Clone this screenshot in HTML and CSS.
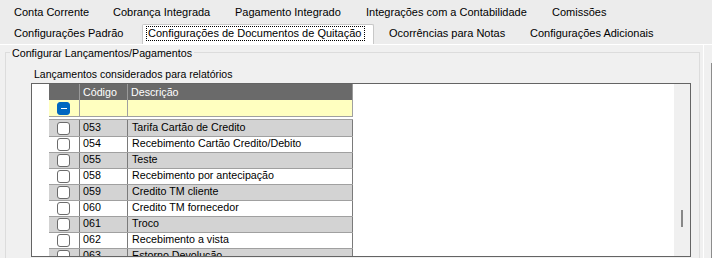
FILE: index.html
```html
<!DOCTYPE html>
<html lang="pt-BR">
<head>
<meta charset="utf-8">
<title>Configurações de Documentos de Quitação</title>
<link rel="stylesheet" href="styles.css">
</head>
<body>
<div class="tabs">
  <div class="tabrow r1">
    <div class="tab c1">Conta Corrente</div>
    <div class="tab c2">Cobrança Integrada</div>
    <div class="tab c3">Pagamento Integrado</div>
    <div class="tab c4">Integrações com a Contabilidade</div>
    <div class="tab">Comissões</div>
  </div>
  <div class="tabrow r2">
    <div class="tab d1">Configurações Padrão</div>
    <div class="tab sel"><span class="focus">Configurações de Documentos de Quitação</span></div>
    <div class="tab d3">Ocorrências para Notas</div>
    <div class="tab">Configurações Adicionais</div>
  </div>
</div>
<div class="body">
  <div class="page">
    <fieldset class="group">
      <legend>Configurar Lançamentos/Pagamentos</legend>
      <div class="lbl">Lançamentos considerados para relatórios</div>
      <div class="grid">
        <div class="rh"></div>
        <div class="tbl">
          <div class="row hdr"><div class="c ck"></div><div class="c cod">Código</div><div class="c desc">Descrição</div></div>
          <div class="row flt"><div class="c ck"><span class="box on"></span></div><div class="c cod"></div><div class="c desc"></div></div>
          <div class="gap"></div>
          <div class="rows">
            <div class="row d alt"><div class="c ck"><span class="box"></span></div><div class="c cod">053</div><div class="c desc">Tarifa Cartão de Credito</div></div>
            <div class="row d"><div class="c ck"><span class="box"></span></div><div class="c cod">054</div><div class="c desc">Recebimento Cartão Credito/Debito</div></div>
            <div class="row d alt"><div class="c ck"><span class="box"></span></div><div class="c cod">055</div><div class="c desc">Teste</div></div>
            <div class="row d"><div class="c ck"><span class="box"></span></div><div class="c cod">058</div><div class="c desc">Recebimento por antecipação</div></div>
            <div class="row d alt"><div class="c ck"><span class="box"></span></div><div class="c cod">059</div><div class="c desc">Credito TM cliente</div></div>
            <div class="row d"><div class="c ck"><span class="box"></span></div><div class="c cod">060</div><div class="c desc">Credito TM fornecedor</div></div>
            <div class="row d alt"><div class="c ck"><span class="box"></span></div><div class="c cod">061</div><div class="c desc">Troco</div></div>
            <div class="row d"><div class="c ck"><span class="box"></span></div><div class="c cod">062</div><div class="c desc">Recebimento a vista</div></div>
            <div class="row d alt"><div class="c ck"><span class="box"></span></div><div class="c cod">063</div><div class="c desc">Estorno Devolução</div></div>
          </div>
        </div>
        <div class="vs"><div class="thumb"></div></div>
      </div>
    </fieldset>
  </div>
  <div class="edge"><div class="eline"></div></div>
</div>
</body>
</html>
```
FILE: styles.css
```css
* { box-sizing: border-box; }
body {
  margin: 0;
  width: 712px;
  height: 258px;
  overflow: hidden;
  background: #f0f0f0;
  font-family: "Liberation Sans", Arial, sans-serif;
  color: #000;
}
.tabs { height: 44px; background: #ececec; }
.tabrow { display: flex; height: 22px; padding-left: 14px; font-size: 11px; white-space: nowrap; }
.r1 .tab { padding-top: 3px; line-height: 19px; }
.r2 .tab { line-height: 22px; }
.c1 { width: 99px; }
.c2 { width: 122px; }
.c3 { width: 131px; }
.c4 { width: 186px; }
.d1 { width: 128px; }
.r2 .sel {
  width: 232px;
  margin-top: 2px;
  height: 20px;
  background: #fff;
  border: 1px solid #c8c8c8;
  border-bottom: none;
  border-radius: 2px 2px 0 0;
  padding: 1px 0 0 3px;
  line-height: 13px;
}
.focus { display: inline-block; border: 1px dotted #000; padding: 0 3px 0 1px; line-height: 13px; }
.d3 { width: 141px; margin-left: 15px; }

.body { display: flex; height: 214px; border-top: 1px solid #fff; overflow: hidden; }
.page { width: 704px; flex: none; border-right: 1px solid #fff; padding-left: 5px; }
.edge { flex: 1; padding-top: 18px; }
.eline { margin-left: 7px; width: 1px; height: 100%; background: #8c8c8c; }

.group {
  margin: 0;
  padding: 0;
  min-width: 0;
  width: 695px;
  height: 230px;
  border: 1px solid #dcdcdc;
}
.group legend { margin-left: 4px; padding: 2px 2px 0; font-size: 10.7px; line-height: 13px; }
.lbl { padding: 8px 0 0 28px; font-size: 10.5px; line-height: 13px; }

.grid {
  margin: 2px 0 0 25px;
  width: 660px;
  height: 174px;
  border: 1px solid #646464;
  background: #fff;
  display: flex;
  overflow: hidden;
}
.rh { width: 17px; flex: none; }
.tbl { width: 625px; flex: none; }
.vs { width: 16px; flex: none; background: #f0f0f0; padding: 126px 0 0 7px; }
.thumb { width: 2px; height: 17px; background: #888; }

.row { display: flex; width: 304px; }
.c { flex: none; border-right: 1px solid #7a7a7a; white-space: nowrap; overflow: hidden; }
.ck { width: 31px; }
.cod { width: 48px; padding-left: 3px; }
.desc { width: 225px; padding-left: 4px; }

.hdr { height: 16px; background: #6a6a6a; color: #fff; font-size: 10.7px; line-height: 16px; }
.hdr .c { border-right-color: #9a9a9a; }
.hdr .desc { padding-left: 3px; }
.flt { height: 17px; background: #ffffc0; border-bottom: 1px solid #a0a0a0; }
.flt .c { border-right-color: #a0a0a0; }
.gap { height: 2px; }
.rows { border-top: 1px solid #a0a0a0; width: 304px; }
.d { height: 16px; border-bottom: 1px solid #a0a0a0; font-size: 10.7px; line-height: 13px; }
.d:first-child { height: 17px; }
.d:first-child .cod, .d:first-child .desc { padding-top: 1px; }
.alt { background: #d3d3d3; }
.ck { display: flex; align-items: center; padding-left: 8px; }
.box { width: 13px; height: 13px; border: 1px solid #6b6b6b; border-radius: 3px; background: #fff; }
.box.on { background: #0067c0; border-color: #0067c0; display: flex; align-items: center; justify-content: center; }
.box.on::after { content: ""; width: 6px; height: 1px; background: #fff; }
```
